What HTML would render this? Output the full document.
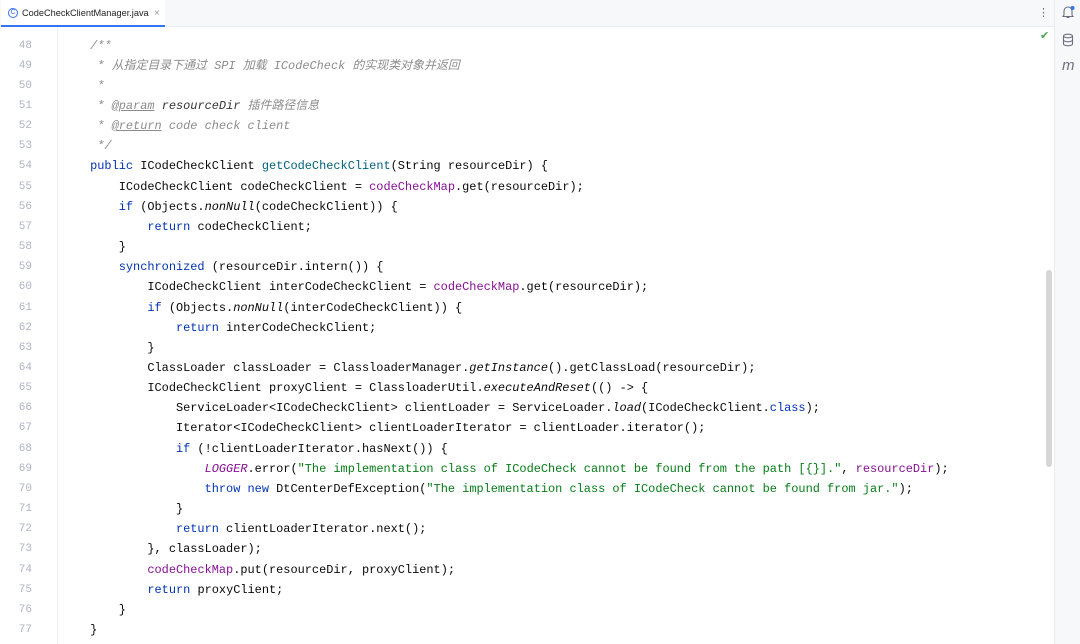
<!DOCTYPE html>
<html><head><meta charset="utf-8"><style>
*{margin:0;padding:0;box-sizing:border-box}
body{width:1080px;height:644px;overflow:hidden;background:#fff;position:relative;font-family:"Liberation Sans",sans-serif}
.tabbar{position:absolute;left:0;top:0;width:1054px;height:27px;background:#f7f8fa;border-bottom:1px solid #ebecf0}
.tab{position:absolute;left:1px;top:0;width:164px;height:27px;background:#fff;border-bottom:2px solid #3574f0;font-size:9.2px;color:#222;padding:8px 0 0 21px;white-space:nowrap}
.tab .ic{position:absolute;left:7px;top:8px;width:10px;height:10px;border:1.2px solid #3574f0;border-radius:50%;font-size:7px;color:#3574f0;text-align:center;line-height:8px;padding:0}
.tab .x{position:absolute;left:153px;top:8px;color:#999;font-size:10px}
.side{position:absolute;left:1054px;top:0;width:26px;height:644px;background:#f7f8fa;border-left:1px solid #ebecf0}
.gutter{position:absolute;left:0;top:27px;width:58px;height:617px;border-right:1px solid #f0f0f0}
.code{position:absolute;left:0;top:35.5px;font-family:"Liberation Mono","Noto Sans CJK SC",monospace;font-size:11.93px;color:#080808}
.l{height:20.17px;line-height:20.17px;position:relative}
.n{position:absolute;left:0;width:32px;text-align:right;color:#aeb3c2;font-size:11px}
.t{position:absolute;left:61.5px;white-space:pre}
.c{color:#8c8c8c;font-style:italic}
.k{color:#0033b3}
.f{color:#00627a}
.m{color:#871094}
.s{color:#067d17}
.i{font-style:italic}
.tg{text-decoration:underline;color:#8c8c8c}
.sb{position:absolute;left:1046px;top:270px;width:6px;height:197px;background:#d6d6d9;border-radius:3px}
</style></head><body>
<div class="tabbar"><div class="tab"><span class="ic">C</span>CodeCheckClientManager.java<span class="x">×</span></div>
<span style="position:absolute;left:1038px;top:6px;color:#666;font-size:11px">⋮</span></div>
<span style="position:absolute;left:1040px;top:29px;color:#4ca24c;font-size:11px">✔</span>
<div class="gutter"></div>
<div class="sb"></div>
<div class="side">
<svg width="26" height="90" style="position:absolute;left:0;top:0"><path d="M9 15 V11 a4 4 0 0 1 8 0 V15 l1 1.5 H8 Z M11.5 17.5 h3" fill="none" stroke="#6c707e" stroke-width="1.1"/><circle cx="17.5" cy="8" r="2" fill="#3574f0"/>
<ellipse cx="13" cy="36" rx="4.5" ry="1.8" fill="none" stroke="#6c707e" stroke-width="1.1"/><path d="M8.5 36 v8 a4.5 1.8 0 0 0 9 0 v-8 M8.5 40 a4.5 1.8 0 0 0 9 0" fill="none" stroke="#6c707e" stroke-width="1.1"/>
<text x="7" y="70" font-family="Liberation Sans" font-style="italic" font-size="15" fill="#6c707e">m</text></svg></div>
<div class="code">
<div class="l"><span class="n">48</span><span class="t c">    /**</span></div>
<div class="l"><span class="n">49</span><span class="t c">     * 从指定目录下通过 SPI 加载 ICodeCheck 的实现类对象并返回</span></div>
<div class="l"><span class="n">50</span><span class="t c">     *</span></div>
<div class="l"><span class="n">51</span><span class="t c">     * <span class="tg">@param</span> <span style="color:#333">resourceDir</span> 插件路径信息</span></div>
<div class="l"><span class="n">52</span><span class="t c">     * <span class="tg">@return</span> code check client</span></div>
<div class="l"><span class="n">53</span><span class="t c">     */</span></div>
<div class="l"><span class="n">54</span><span class="t">    <span class="k">public</span> ICodeCheckClient <span class="f">getCodeCheckClient</span>(String resourceDir) {</span></div>
<div class="l"><span class="n">55</span><span class="t">        ICodeCheckClient codeCheckClient = <span class="m">codeCheckMap</span>.get(resourceDir);</span></div>
<div class="l"><span class="n">56</span><span class="t">        <span class="k">if</span> (Objects.<span class="i">nonNull</span>(codeCheckClient)) {</span></div>
<div class="l"><span class="n">57</span><span class="t">            <span class="k">return</span> codeCheckClient;</span></div>
<div class="l"><span class="n">58</span><span class="t">        }</span></div>
<div class="l"><span class="n">59</span><span class="t">        <span class="k">synchronized</span> (resourceDir.intern()) {</span></div>
<div class="l"><span class="n">60</span><span class="t">            ICodeCheckClient interCodeCheckClient = <span class="m">codeCheckMap</span>.get(resourceDir);</span></div>
<div class="l"><span class="n">61</span><span class="t">            <span class="k">if</span> (Objects.<span class="i">nonNull</span>(interCodeCheckClient)) {</span></div>
<div class="l"><span class="n">62</span><span class="t">                <span class="k">return</span> interCodeCheckClient;</span></div>
<div class="l"><span class="n">63</span><span class="t">            }</span></div>
<div class="l"><span class="n">64</span><span class="t">            ClassLoader classLoader = ClassloaderManager.<span class="i">getInstance</span>().getClassLoad(resourceDir);</span></div>
<div class="l"><span class="n">65</span><span class="t">            ICodeCheckClient proxyClient = ClassloaderUtil.<span class="i">executeAndReset</span>(() -&gt; {</span></div>
<div class="l"><span class="n">66</span><span class="t">                ServiceLoader&lt;ICodeCheckClient&gt; clientLoader = ServiceLoader.<span class="i">load</span>(ICodeCheckClient.<span class="k">class</span>);</span></div>
<div class="l"><span class="n">67</span><span class="t">                Iterator&lt;ICodeCheckClient&gt; clientLoaderIterator = clientLoader.iterator();</span></div>
<div class="l"><span class="n">68</span><span class="t">                <span class="k">if</span> (!clientLoaderIterator.hasNext()) {</span></div>
<div class="l"><span class="n">69</span><span class="t">                    <span class="m i">LOGGER</span>.error(<span class="s">"The implementation class of ICodeCheck cannot be found from the path [{}]."</span>, <span class="m">resourceDir</span>);</span></div>
<div class="l"><span class="n">70</span><span class="t">                    <span class="k">throw new</span> DtCenterDefException(<span class="s">"The implementation class of ICodeCheck cannot be found from jar."</span>);</span></div>
<div class="l"><span class="n">71</span><span class="t">                }</span></div>
<div class="l"><span class="n">72</span><span class="t">                <span class="k">return</span> clientLoaderIterator.next();</span></div>
<div class="l"><span class="n">73</span><span class="t">            }, classLoader);</span></div>
<div class="l"><span class="n">74</span><span class="t">            <span class="m">codeCheckMap</span>.put(resourceDir, proxyClient);</span></div>
<div class="l"><span class="n">75</span><span class="t">            <span class="k">return</span> proxyClient;</span></div>
<div class="l"><span class="n">76</span><span class="t">        }</span></div>
<div class="l"><span class="n">77</span><span class="t">    }</span></div>
</div>
</body></html>
